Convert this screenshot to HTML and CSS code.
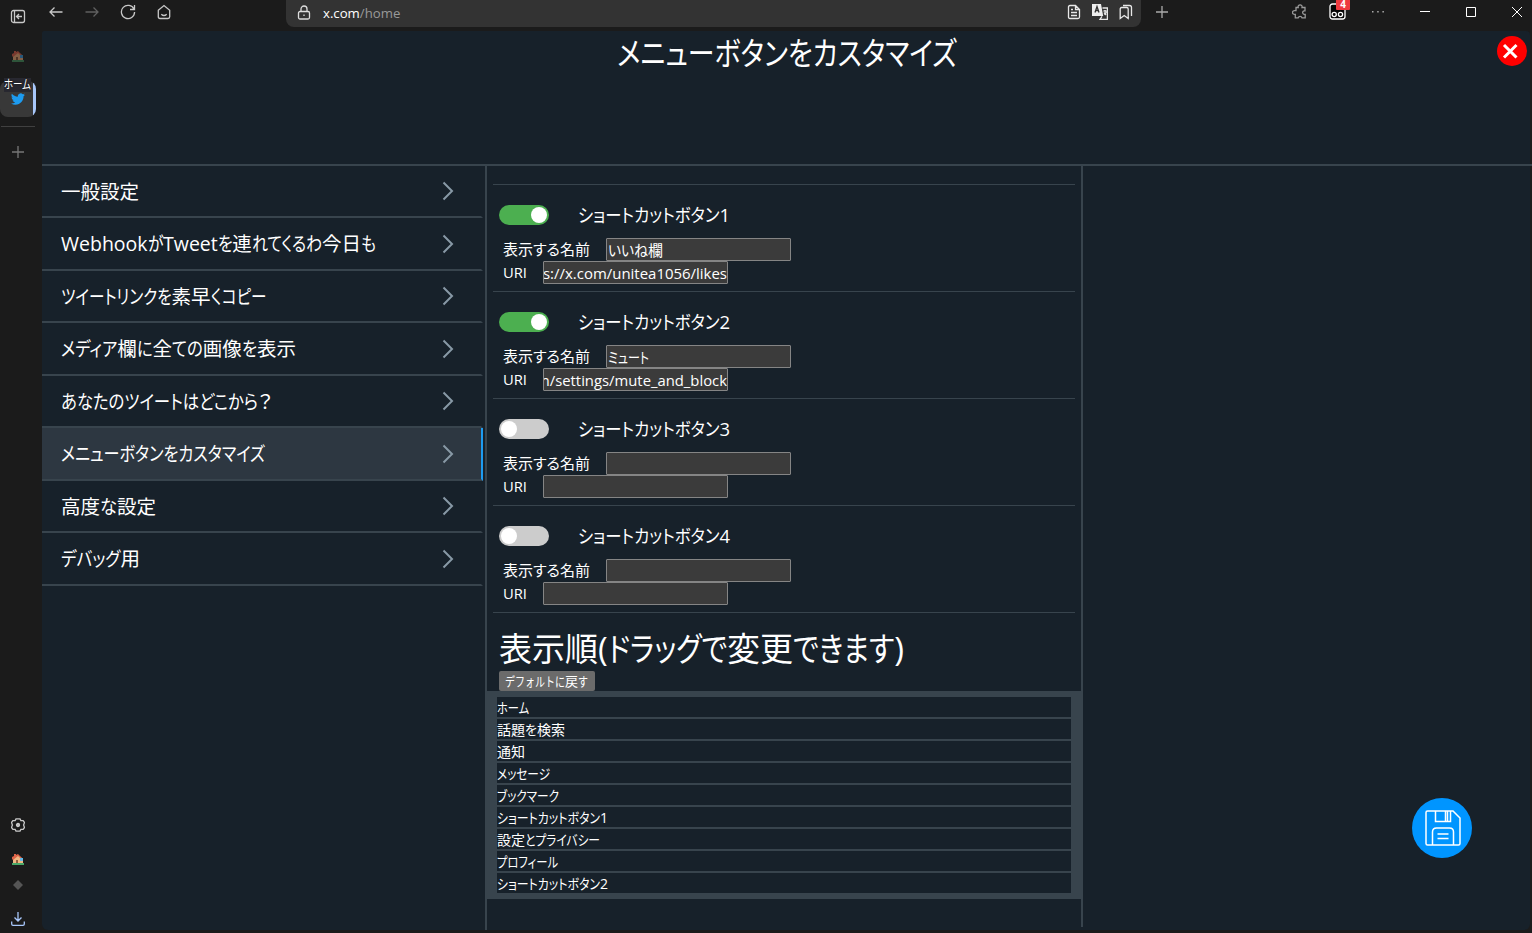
FILE: index.html
```html
<!DOCTYPE html>
<html lang="ja">
<head>
<meta charset="utf-8">
<title>メニューボタンをカスタマイズ</title>
<link rel="stylesheet" href="styles.css">
</head>
<body>
<div class="window">
  <aside class="rail">
    <svg class="rail-icon collapse" viewBox="0 0 16 16"><rect x="1.5" y="1.5" width="13" height="12" rx="2"/><path d="M4.5 1.5v12M12 7.5H6.8M9 5 6.5 7.5 9 10"/></svg>
    <svg class="house faded" viewBox="0 0 12 12"><path fill="#3c7a50" d="M0 10h12v2H0z"/><path fill="#c98d62" d="M1 6l5-4 5 4v4H1z"/><path fill="#b84e3b" d="M0 6V4l2-1V1h2v1l2-1 5 5-1 1-4-4-5 4z"/><path fill="#3180b8" d="M8 5h3v3H8z"/><path fill="#72462e" d="M4 7h2v3H4z"/></svg>
    <div class="tab">
      <span class="tab-label" data-w="27">ホーム</span>
      <svg class="bird" viewBox="0 0 24 24"><path d="M23.95 4.57a10 10 0 0 1-2.82.77 4.96 4.96 0 0 0 2.16-2.72c-.95.55-2 .95-3.13 1.18a4.92 4.92 0 0 0-8.38 4.48C7.69 8.1 4.07 6.13 1.64 3.16a4.93 4.93 0 0 0 1.52 6.57 4.9 4.9 0 0 1-2.23-.61v.06a4.92 4.92 0 0 0 3.95 4.83 5 5 0 0 1-2.21.08 4.94 4.94 0 0 0 4.6 3.42A9.87 9.87 0 0 1 0 19.54a14 14 0 0 0 7.55 2.21c9.05 0 14-7.5 14-13.98 0-.21 0-.42-.02-.63a9.94 9.94 0 0 0 2.46-2.55z"/></svg>
    </div>
    <div class="rail-line"></div>
    <svg class="rail-icon add" viewBox="0 0 12 12"><path d="M6 0v12M0 6h12"/></svg>
    <svg class="rail-icon gear" viewBox="0 0 14 14"><path d="M5 .9h4l.9 1.700 2.200.1L13.500 4.500 12.600 7l.9 2.500-1.400 1.800-2.200.1L9 13.100H5l-.9-1.700-2.200-.1L.5 9.500 1.400 7 .5 4.500l1.400-1.800 2.200-.1z"/><circle cx="7" cy="7" r="1.500" fill="#bbb"/></svg>
    <svg class="house small" viewBox="0 0 12 12"><path fill="#48a868" d="M0 10h12v2H0z"/><path fill="#f0b884" d="M1 6l5-4 5 4v4H1z"/><path fill="#df6549" d="M0 6V4l2-1V1h2v1l2-1 5 5-1 1-4-4-5 4z"/><path fill="#65b9e8" d="M8 5h3v3H8z"/><path fill="#925f3d" d="M4 7h2v3H4z"/></svg>
    <svg class="diamond" viewBox="0 0 10 10"><path d="m5 0 5 5-5 5-5-5z"/></svg>
    <svg class="rail-icon download" viewBox="0 0 14 14"><path d="M7 0v9M3.5 5.5 7 9l3.500-3.500M.7 9.500V12q0 1.300 1.300 1.300h10q1.300 0 1.300-1.300V9.500"/></svg>
  </aside>
  <div class="main">
    <header class="topbar">
      <nav class="nav">
        <svg viewBox="0 0 16 16"><path d="M14.500 8H2M6.500 3.500 2 8l4.500 4.500"/></svg>
        <svg class="dim" viewBox="0 0 16 16"><path d="M1.500 8H14M9.500 3.500 14 8l-4.500 4.500"/></svg>
        <svg viewBox="0 0 16 16"><path d="M14 5.200A6.600 6.600 0 1 0 14.600 8M14.500 1v4.500H10"/></svg>
        <svg viewBox="0 0 16 16"><path d="M2.300 6.200 8 1.500l5.700 4.700v6.600q0 1.700-1.700 1.700H4q-1.700 0-1.700-1.700zM5.300 10.200q2.700 2.600 5.400 0"/></svg>
      </nav>
      <div class="address">
        <svg class="lock" viewBox="0 0 14 16"><rect x="1.500" y="6.500" width="11" height="7.500" rx="1.500"/><path d="M4 6.500V4a3 3 0 0 1 6 0v2.500M7 9.500v1.500"/></svg>
        <span class="url"><b>x.com</b>/home</span>
        <div class="address-tools">
          <svg viewBox="0 0 16 16"><path d="M4 1.500h5.500l4 4V13q0 1.500-1.500 1.500H4q-1.500 0-1.500-1.500V3Q2.500 1.500 4 1.500zM9.500 1.500v4h4M5 5.500h2M5 8.500h6M5 11.500h6"/></svg>
          <svg viewBox="0 0 16 16"><path fill="#eee" stroke="none" d="M0 0h9l2.200 12H0z"/><path stroke="#333" d="m3 8.500 2-6 2 6M3.500 6.500h3"/><path d="M10.500 4H15.400v11.300H8l2-3M11.500 7h3M13 6v1.500M14.300 7.500q-.5 2-2 3M12 8.500l2 2.500"/></svg>
          <svg viewBox="0 0 16 16"><path d="M2.200 5q0-1.500 1.500-1.500h5q1.500 0 1.500 1.500v9.500l-4-3-4 3zM5 1.500h6.500q2 0 2 2V12"/></svg>
        </div>
      </div>
      <svg class="new-tab" viewBox="0 0 12 12"><path d="M6 0v12M0 6h12"/></svg>
      <div class="controls">
        <svg class="puzzle" viewBox="0 0 16 16"><path d="M4 3.500h2.200a2 2 0 1 1 3.800 0h3v3.300h-1a1.800 1.800 0 0 0 0 3.500h1.200v3.500H10a2 2 0 0 0-3.800 0H3.300v-3.500H3a1.900 1.900 0 1 1 0-3.600h1z"/></svg>
        <div class="addon"><svg viewBox="0 0 18 18"><rect x="1" y="1" width="15" height="15" rx="2.500" fill="#050505"/><circle cx="5.200" cy="11.500" r="2.100"/><circle cx="11.500" cy="11.500" r="2.100"/></svg><span class="count">4</span></div>
        <svg class="dots" viewBox="0 0 14 4"><path d="M1 1h1.500v1.500H1zM6.200 1h1.500v1.500H6.200zM11.400 1h1.500v1.500h-1.500z"/></svg>
        <svg class="min" viewBox="0 0 12 12"><path d="M1 5.500h10"/></svg>
        <svg class="max" viewBox="0 0 12 12"><path d="M1.500 1.500h9v9h-9z"/></svg>
        <svg class="quit" viewBox="0 0 12 12"><path d="m1 1 10 10M11 1 1 11"/></svg>
      </div>
    </header>
    <div class="page">
      <div class="page-head">
        <h1 data-w="340">メニューボタンをカスタマイズ</h1>
        <button class="close" aria-label="close"><svg viewBox="0 0 30 30"><path d="m7 9 12.500 12.500M19.500 9 7 21.500"/></svg></button>
      </div>
      <div class="columns">
        <nav class="menu">
          <a class="item"><span data-w="78">一般設定</span><svg viewBox="0 0 12 20"><path d="m1.500 1.500 8.500 8.500-8.500 8.500"/></svg></a>
          <a class="item"><span data-w="315">WebhookがTweetを連れてくるわ今日も</span><svg viewBox="0 0 12 20"><path d="m1.500 1.500 8.500 8.500-8.500 8.500"/></svg></a>
          <a class="item"><span data-w="205">ツイートリンクを素早くコピー</span><svg viewBox="0 0 12 20"><path d="m1.500 1.500 8.500 8.500-8.500 8.500"/></svg></a>
          <a class="item"><span data-w="235">メディア欄に全ての画像を表示</span><svg viewBox="0 0 12 20"><path d="m1.500 1.500 8.500 8.500-8.500 8.500"/></svg></a>
          <a class="item"><span data-w="211">あなたのツイートはどこから？</span><svg viewBox="0 0 12 20"><path d="m1.500 1.500 8.500 8.500-8.500 8.500"/></svg></a>
          <a class="item active"><span data-w="204">メニューボタンをカスタマイズ</span><svg viewBox="0 0 12 20"><path d="m1.500 1.500 8.500 8.500-8.500 8.500"/></svg></a>
          <a class="item"><span data-w="95">高度な設定</span><svg viewBox="0 0 12 20"><path d="m1.500 1.500 8.500 8.500-8.500 8.500"/></svg></a>
          <a class="item"><span data-w="79">デバッグ用</span><svg viewBox="0 0 12 20"><path d="m1.500 1.500 8.500 8.500-8.500 8.500"/></svg></a>
        </nav>
        <section class="settings">
          <div class="shortcut">
            <div class="switch-row"><i class="switch on"></i><span data-w="152">ショートカットボタン1</span></div>
            <div class="field name"><label data-w="87">表示する名前</label><div class="box"><span data-w="55">いいね欄</span></div></div>
            <div class="field uri"><label data-w="24">URI</label><div class="box end"><span data-w="184">s://x.com/unitea1056/likes</span></div></div>
          </div>
          <div class="shortcut">
            <div class="switch-row"><i class="switch on"></i><span data-w="152">ショートカットボタン2</span></div>
            <div class="field name"><label data-w="87">表示する名前</label><div class="box"><span data-w="41">ミュート</span></div></div>
            <div class="field uri"><label data-w="24">URI</label><div class="box end"><span data-w="191">m/settings/mute_and_block</span></div></div>
          </div>
          <div class="shortcut">
            <div class="switch-row"><i class="switch"></i><span data-w="152">ショートカットボタン3</span></div>
            <div class="field name"><label data-w="87">表示する名前</label><div class="box"></div></div>
            <div class="field uri"><label data-w="24">URI</label><div class="box"></div></div>
          </div>
          <div class="shortcut">
            <div class="switch-row"><i class="switch"></i><span data-w="152">ショートカットボタン4</span></div>
            <div class="field name"><label data-w="87">表示する名前</label><div class="box"></div></div>
            <div class="field uri"><label data-w="24">URI</label><div class="box"></div></div>
          </div>
          <div class="order-head">
            <h2 data-w="405">表示順(ドラッグで変更できます)</h2>
            <button class="reset"><span data-w="83">デフォルトに戻す</span></button>
          </div>
          <ul class="order">
            <li><span data-w="32">ホーム</span></li>
            <li><span data-w="68">話題を検索</span></li>
            <li><span data-w="28">通知</span></li>
            <li><span data-w="53">メッセージ</span></li>
            <li><span data-w="62">ブックマーク</span></li>
            <li><span data-w="111">ショートカットボタン1</span></li>
            <li><span data-w="103">設定とプライバシー</span></li>
            <li><span data-w="61">プロフィール</span></li>
            <li><span data-w="111">ショートカットボタン2</span></li>
          </ul>
        </section>
        <div class="side">
          <button class="save" aria-label="save"><svg viewBox="0 0 36 36"><path d="M2.500 1h25.500l7 7v25.500q0 1.500-1.500 1.500h-31Q1 35 1 33.500v-31Q1 1 2.500 1zM10.500 1v10.500h15V1M20.500 1v10.500M22.500 1v10.500M7.500 35V22q0-4 4-4h13q4 0 4 4v13M12.500 24h11M12.500 28.500h11"/></svg></button>
        </div>
      </div>
    </div>
  </div>
</div>
<script src="fit.js"></script>
</body>
</html>
```
FILE: styles.css
```css
* { box-sizing: border-box; }
body {
  margin: 0;
  width: 1532px;
  height: 933px;
  overflow: hidden;
  background: #1b1b1b;
  color: #fff;
  font-family: "Open Sans", "Noto Sans CJK JP", sans-serif;
  font-feature-settings: "palt";
}
svg { display: block; fill: none; stroke: #c8c8c8; stroke-width: 1.3; flex: none; }
button { border: 0; padding: 0; color: inherit; font-family: inherit; }
[data-w] { white-space: nowrap; }
.run { display: inline-block; transform-origin: 0 50%; white-space: nowrap; }

.window { display: flex; height: 933px; }
.rail { width: 42px; flex: none; display: flex; flex-direction: column; }
.rail > svg { margin-left: 11px; }
.rail > .collapse { width: 16px; height: 16px; margin-top: 9px; margin-left: 10px; }
.house { width: 12px; height: 12px; stroke: none; }
.rail > .house { margin-left: 12px; }
.faded { margin-top: 25px; opacity: .6; }
.tab {
  width: 36px; height: 36px; margin-top: 19px;
  border-radius: 8px; background: linear-gradient(90deg, #383838 33px, #a8c7fa 33px);
  display: flex; flex-direction: column; align-items: center;
}
.tab-label { align-self: flex-start; margin: -3px 0 0 4px; font-size: 12px; line-height: 14px; width: 27px; text-shadow: 0 0 2px #111; background: #282830; }
.bird { width: 14px; height: 14px; fill: #1d9bf0; stroke: none; }
.rail-line { width: 34px; height: 1px; margin: 9px 0 0 1px; background: #404040; }
.rail > .add { width: 12px; height: 12px; margin: 19px 0 0 12px; stroke: #777; }
.rail > .gear { width: 14px; height: 14px; margin-top: auto; }
.small { margin-top: 21px; }
.rail > .diamond { width: 10px; height: 10px; margin: 15px 0 0 13px; fill: #555; stroke: none; }
.rail > .download { width: 14px; height: 14px; margin: 22px 0 7px 11px; stroke: #a8c7fa; }

.main { flex: 1; min-width: 0; }
.topbar { height: 31px; display: flex; align-items: flex-start; }
.nav { display: flex; gap: 20px; padding: 4px 0 0 6px; }
.nav svg { width: 16px; height: 16px; }
.nav .dim { stroke: #606060; }
.address {
  width: 855px; height: 27px; margin-left: 114px; padding: 0 7px 0 11px;
  background: #333; border-radius: 0 0 8px 8px; display: flex; align-items: center; flex: none;
}
.lock { width: 14px; height: 16px; margin-top: -2px; stroke: #ddd; }
.url { margin: -2px 0 0 12px; font-size: 13.200px; line-height: 26px; color: #999; }
.url b { color: #fff; font-weight: 400; }
.address-tools { display: flex; gap: 10px; margin: -3px 0 0 auto; }
.address-tools svg { width: 16px; height: 16px; stroke: #e8e8e8; }
.new-tab { width: 12px; height: 12px; margin: 6px 0 0 15px; stroke: #aaa; }
.controls { display: flex; margin-left: auto; }
.puzzle { width: 16px; height: 16px; margin: 4px 21px 0 0; stroke: #999; }
.addon { position: relative; margin: 3px 24px 0 0; }
.addon svg { width: 18px; height: 18px; stroke: #fff; }
.count { position: absolute; left: 7px; top: -4px; width: 14px; height: 11px; background: #ee3a3f; border-radius: 1px; font: 700 10px/11px "Open Sans", sans-serif; text-align: center; }
.dots { width: 14px; height: 4px; margin: 10px 34px 0 0; fill: #aaa; stroke: none; }
.controls .min, .controls .max, .controls .quit { width: 12px; height: 12px; margin-top: 6px; stroke: #fff; stroke-width: 1; }
.min { margin-right: 34px; }
.max { margin-right: 34px; }
.quit { margin-right: 9px; }

.page { width: 1488px; height: 899px; background: #17212a; border-radius: 2px 4px 6px 6px; display: flex; flex-direction: column; }
.page-head { height: 135px; width: 1490px; border-bottom: 2px solid #38444d; position: relative; display: flex; justify-content: center; }
h1 { margin: -2px 0 0; font-size: 32px; line-height: 48px; font-weight: 400; width: 340px; }
.close { position: absolute; right: 5px; top: 5px; width: 30px; height: 30px; border-radius: 50%; background: #f00; }
.close svg { stroke: #fff; stroke-width: 3; }
.columns { flex: 1; display: flex; min-height: 0; }
.menu { width: 443px; flex: none; }
.item {
  width: 441px; height: 52.490px; padding: 0 26px 0 19px;
  border-bottom: 2px solid #38444d; border-right: 2px solid transparent;
  display: flex; align-items: center; justify-content: space-between;
  font-size: 19.500px; line-height: 28px;
}
.item span[data-w] { margin-top: 1px; }
.item svg { width: 12px; height: 20px; stroke: #8899a6; stroke-width: 2; margin-right: 1px; }
.active { background: #2d3741; border-right-color: #1d9bf0; }
.settings { width: 598px; flex: none; border-left: 2px solid #38444d; padding: 18px 2px 0 0; background: linear-gradient(#38444d, #38444d) 100% 0 / 2px 761px no-repeat; }
.shortcut { height: 107px; margin: 0 6px; padding: 16px 6px 0; border-top: 1px solid #38444d; font-size: 15px; }
.switch-row { height: 28px; display: flex; align-items: center; gap: 29px; font-size: 18.500px; line-height: 28px; }
.switch { width: 50px; height: 20px; padding: 2px; border-radius: 10px; background: #ccc; display: flex; flex: none; align-items: center; }
.switch::before { content: ""; width: 16px; height: 16px; border-radius: 50%; background: #fff; }
.switch.on { background: #4caf50; justify-content: flex-end; }
.field { height: 23px; display: flex; padding-left: 4px; line-height: 22px; }
.switch-row + .field { margin-top: 9px; }
.field label { width: 103px; }
.field.uri label { width: 40px; }
.box { width: 185px; height: 23px; border: 1px solid #858585; border-radius: 1px; background: #3b3b3b; padding-left: 1px; overflow: hidden; display: flex; line-height: 22px; }
.box.end { justify-content: flex-end; padding: 0; }
.order-head { height: 79px; margin: 0 6px; padding: 14px 6px 0; border-top: 1px solid #38444d; display: flex; flex-direction: column; align-items: flex-start; }
h2 { margin: 0; font-size: 33px; line-height: 44px; height: 44px; font-weight: 400; }
.reset { width: 96px; height: 20px; border-radius: 2px; background: #6b6b6b; font-size: 13px; line-height: 20px; padding-left: 6px; text-align: left; }
.order { list-style: none; margin: 0 -2px 0 0; padding: 6px 12px 6px 10px; background: #38444d; display: flex; flex-direction: column; gap: 2px; font-size: 14px; }
.order li { height: 20px; line-height: 21px; background: #17212a; }
.side { flex: 1; display: flex; align-items: flex-end; justify-content: flex-end; padding: 0 58px 72px 0; }
.save { width: 60px; height: 60px; border-radius: 50%; background: #0095ff; display: flex; align-items: center; justify-content: center; }
.save svg { width: 36px; height: 36px; stroke: #fff; stroke-width: 1.500; margin-left: 1px; }
```
FILE: fit.js
```js
// Narrows kana runs (or the whole label when it has none) so each label keeps its set width.
document.querySelectorAll('[data-w]').forEach(function (el) {
  var target = Number(el.dataset.w);
  var text = el.textContent;
  var kana = /[\u3040-\u30ff]/;
  var parts = text.match(/[\u3040-\u30ff]+|[^\u3040-\u30ff]+/g);
  var hasKana = kana.test(text);
  el.textContent = '';
  var runs = parts.map(function (part) {
    var run = document.createElement('span');
    run.className = 'run';
    run.textContent = part;
    el.appendChild(run);
    return { node: run, flex: !hasKana || kana.test(part), width: run.getBoundingClientRect().width };
  });
  var fixed = 0, loose = 0;
  runs.forEach(function (r) { if (r.flex) loose += r.width; else fixed += r.width; });
  var scale = (target - fixed) / loose;
  runs.forEach(function (r) {
    if (!r.flex) return;
    r.node.style.width = r.width * scale + 'px';
    r.node.style.transform = 'scaleX(' + scale + ')';
  });
});
```
